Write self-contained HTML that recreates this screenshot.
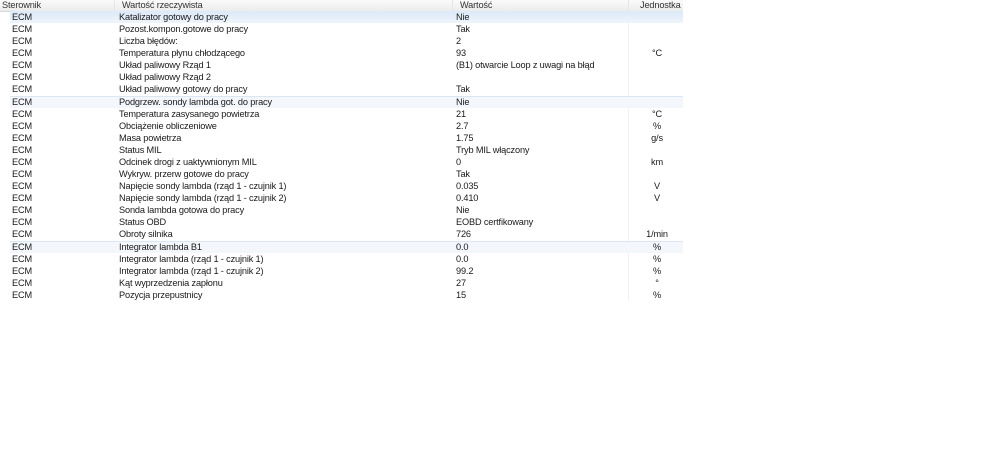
<!DOCTYPE html>
<html><head><style>
body{margin:0;width:1000px;height:459px;background:#fff;font-family:"Liberation Sans",Arial,sans-serif;font-size:9.2px;letter-spacing:-0.15px;color:#1a1a1a;position:relative;overflow:hidden}
.h{position:absolute;left:0;top:0;width:683px;height:11px;background:linear-gradient(#fafafa,#ececec);border-bottom:1px solid #d8d8d8}
.h span{position:absolute;top:0;line-height:11px;color:#333}
.sep{position:absolute;top:0;height:11px;width:1px;background:#e6e6e6}
.r{position:absolute;left:0;width:683px;height:12px;line-height:13px}
.r span{position:absolute;top:0}
.hl{background:linear-gradient(#dce9f8,#eef4fb);left:10px;width:673px}
.hl2{background:#f3f7fc;border-top:1px solid #dbe6f3;left:10px;width:673px;box-sizing:border-box}
.vl{position:absolute;top:11px;height:290px;width:1px;background:#f0f0f0}
</style></head><body>
<div class="h"><span style="left:2px">Sterownik</span><span style="left:122px">Wartość rzeczywista</span><span style="left:460px">Wartość</span><span style="left:640px">Jednostka</span><div class="sep" style="left:114px"></div><div class="sep" style="left:452px"></div><div class="sep" style="left:628px"></div></div>
<div class="vl" style="left:628px"></div>
<div id="rows"></div>
<script>
var d=[["Katalizator gotowy do pracy","Nie",""],["Pozost.kompon.gotowe do pracy","Tak",""],["Liczba błędów:","2",""],["Temperatura płynu chłodzącego","93","°C"],["Układ paliwowy Rząd 1","(B1) otwarcie Loop z uwagi na błąd",""],["Układ paliwowy Rząd 2","",""],["Układ paliwowy gotowy do pracy","Tak",""],["Podgrzew. sondy lambda got. do pracy","Nie",""],["Temperatura zasysanego powietrza","21","°C"],["Obciążenie obliczeniowe","2.7","%"],["Masa powietrza","1.75","g/s"],["Status MIL","Tryb MIL włączony",""],["Odcinek drogi z uaktywnionym MIL","0","km"],["Wykryw. przerw gotowe do pracy","Tak",""],["Napięcie sondy lambda (rząd 1 - czujnik 1)","0.035","V"],["Napięcie sondy lambda (rząd 1 - czujnik 2)","0.410","V"],["Sonda lambda gotowa do pracy","Nie",""],["Status OBD","EOBD certfikowany",""],["Obroty silnika","726","1/min"],["Integrator lambda B1","0.0","%"],["Integrator lambda (rząd 1 - czujnik 1)","0.0","%"],["Integrator lambda (rząd 1 - czujnik 2)","99.2","%"],["Kąt wyprzedzenia zapłonu","27","°"],["Pozycja przepustnicy","15","%"]];
var h="";
d.forEach(function(r,i){var t=11+i*12.08;var c=i==0?"hl":(i==7||i==19?"hl2":"");
if(c)h+='<div class="r '+c+'" style="top:'+t+'px"></div>';
h+='<div class="r" style="top:'+t+'px"><span style="left:12px">ECM</span><span style="left:119px">'+r[0]+'</span><span style="left:456px">'+r[1]+'</span><span style="left:628px;width:58px;text-align:center">'+r[2]+'</span></div>';});
document.getElementById("rows").innerHTML=h;
</script>
</body></html>
